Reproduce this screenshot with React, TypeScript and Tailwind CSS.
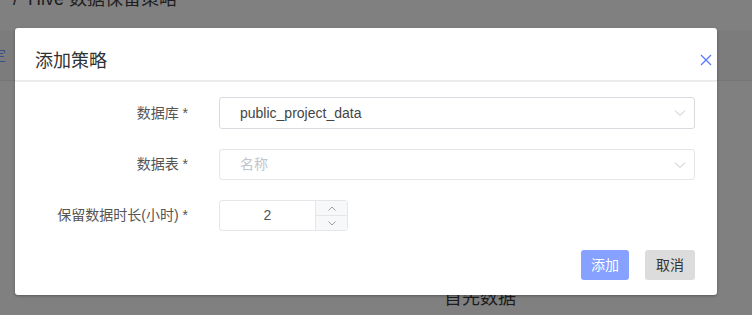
import React from "react";

const font = { fontFamily: '"Liberation Sans", "Noto Sans CJK SC", sans-serif' };

function Chevron() {
  return (
    <svg width="12" height="8" viewBox="0 0 12 8" fill="none">
      <path d="M1 1.5 L6 6.5 L11 1.5" stroke="#c0c4cc" strokeWidth="1" />
    </svg>
  );
}

export default function App() {
  return (
    <div className="relative w-[752px] h-[315px] overflow-hidden bg-[#808080]" style={font}>
      {/* background page (dimmed) */}
      <div className="flex flex-col h-full">
        <div className="h-[44px] flex items-start pl-[13px] -mt-[14px] text-[18px] text-[#1e1e1e]">
          <span>/&nbsp;&nbsp;Hive 数据保留策略</span>
        </div>
        <div className="h-[51px] bg-[#7c7c7c] border-b border-[#767676] flex items-center text-[#3d4f8a] text-[14px]">
          <span className="-ml-[8px]">定</span>
        </div>
        <div className="flex-1 relative">
          <div className="absolute left-[444px] top-[204px] text-[18px] text-[#1c1c1c]">首先数据</div>
        </div>
      </div>

      {/* modal */}
      <div className="absolute left-[15px] top-[28px] w-[702px] h-[267px] bg-white rounded-[3px] shadow-[0_1px_3px_rgba(0,0,0,0.3)] flex flex-col">
        <div className="h-[54px] flex items-center justify-between pt-[14px] pl-[20px] pr-[5px] border-b-2 border-[#ececec]">
          <span className="text-[18px] text-[#303133]">添加策略</span>
          <svg width="12" height="12" viewBox="0 0 12 12" className="-mt-[3px]">
            <path d="M1 1 L11 11 M11 1 L1 11" stroke="#5b7cff" strokeWidth="1.4" />
          </svg>
        </div>
        <div className="flex flex-col pt-[15px] gap-[20px] pr-[22px]">
          <div className="flex items-center h-[32px]">
            <div className="w-[173px] text-right text-[14px] text-[#555]">数据库 *</div>
            <div className="ml-[31px] w-[476px] h-[32px] border border-[#d9dbe0] rounded-[3px] flex items-center justify-between pl-[20px] pr-[8px]">
              <span className="text-[14px] text-[#444]">public_project_data</span>
              <Chevron />
            </div>
          </div>
          <div className="flex items-center h-[31px]">
            <div className="w-[173px] text-right text-[14px] text-[#555]">数据表 *</div>
            <div className="ml-[31px] w-[476px] h-[31px] border border-[#e4e6ea] rounded-[3px] flex items-center justify-between pl-[20px] pr-[8px]">
              <span className="text-[14px] text-[#c0c4cc]">名称</span>
              <Chevron />
            </div>
          </div>
          <div className="flex items-center h-[31px]">
            <div className="w-[173px] text-right text-[14px] text-[#555]">保留数据时长(小时) *</div>
            <div className="ml-[31px] w-[129px] h-[31px] border border-[#e4e6ea] rounded-[3px] flex">
              <div className="flex-1 flex items-center justify-center text-[14px] text-[#555]">2</div>
              <div className="w-[32px] border-l border-[#e4e6ea] flex flex-col bg-[#f7f8fa]">
                <div className="flex-1 flex items-center justify-center border-b border-[#e4e6ea]">
                  <svg width="8" height="5" viewBox="0 0 8 5" fill="none">
                    <path d="M0.5 4.5 L4 1 L7.5 4.5" stroke="#909399" strokeWidth="0.9" />
                  </svg>
                </div>
                <div className="flex-1 flex items-center justify-center">
                  <svg width="8" height="5" viewBox="0 0 8 5" fill="none">
                    <path d="M0.5 0.5 L4 4 L7.5 0.5" stroke="#909399" strokeWidth="0.9" />
                  </svg>
                </div>
              </div>
            </div>
          </div>
        </div>
        <div className="flex justify-end gap-[16px] pr-[22px] mt-[19px]">
          <button className="w-[48px] h-[30px] rounded-[3px] bg-[#86a1ff] text-white text-[14px]">添加</button>
          <button className="w-[50px] h-[30px] rounded-[3px] bg-[#dcdcdc] text-[#333] text-[14px]">取消</button>
        </div>
      </div>
    </div>
  );
}
